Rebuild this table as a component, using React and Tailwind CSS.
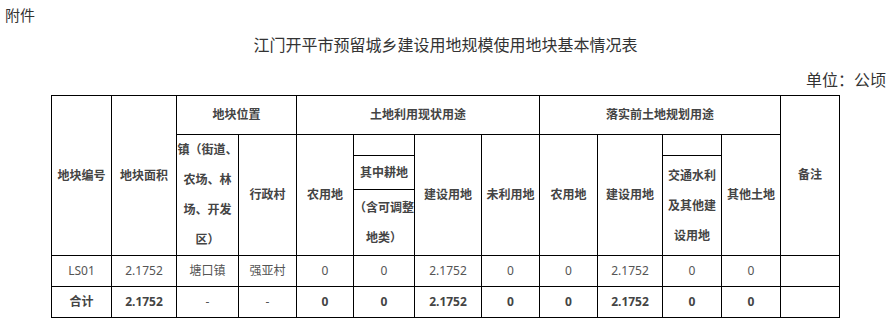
const COLS = 'grid-cols-[59px_64px_61px_57px_56px_60px_66px_57px_57px_64px_58px_58px_58px]'
const ROWS = 'grid-rows-[38px_20px_33px_65px_30px_30px]'

const dataRow = ['LS01', '2.1752', '塘口镇', '强亚村', '0', '0', '2.1752', '0', '0', '2.1752', '0', '0', '']
const totalRow = ['合计', '2.1752', '-', '-', '0', '0', '2.1752', '0', '0', '2.1752', '0', '0', '']

function Cell({ className = '', children }) {
  return (
    <div className={`bg-white flex flex-col items-center justify-center text-center whitespace-nowrap ${className}`}>
      {children}
    </div>
  )
}

function Lines({ lines }) {
  return (
    <div className="leading-[30px]">
      {lines.map((l) => (
        <div key={l}>{l}</div>
      ))}
    </div>
  )
}

export default function App() {
  return (
    <div
      className="w-[891px] h-[325px] bg-white px-[5px] text-[#333]"
      style={{ fontFamily: '"Noto Sans", "Noto Sans CJK SC", sans-serif' }}
    >
      <div className="text-[15px] leading-[30px]">附件</div>
      <div className="text-[16px] leading-[30px] text-center">江门开平市预留城乡建设用地规模使用地块基本情况表</div>
      <div className="text-[16px] leading-[30px] text-right mt-[5px]">单位：公顷</div>

      {/* table */}
      <div className="flex justify-center">
        <div className={`grid ${COLS} ${ROWS} gap-px p-px bg-black text-[12px] text-[#555]`}>
          {/* header */}
          <Cell className="row-span-4 font-bold text-[#444]">地块编号</Cell>
          <Cell className="row-span-4 font-bold text-[#444]">地块面积</Cell>
          <Cell className="col-span-2 font-bold text-[#444]">地块位置</Cell>
          <Cell className="col-span-4 font-bold text-[#444]">土地利用现状用途</Cell>
          <Cell className="col-span-4 font-bold text-[#444]">落实前土地规划用途</Cell>
          <Cell className="row-span-4 font-bold text-[#444] pb-[2px]">备注</Cell>

          <Cell className="row-span-3 font-bold text-[#444]">
            <Lines lines={['镇（街道、', '农场、林', '场、开发', '区）']} />
          </Cell>
          <Cell className="row-span-3 font-bold text-[#444]">行政村</Cell>
          <Cell className="row-span-3 font-bold text-[#444]">农用地</Cell>
          <Cell />
          <Cell className="row-span-3 font-bold text-[#444]">建设用地</Cell>
          <Cell className="row-span-3 font-bold text-[#444]">未利用地</Cell>
          <Cell className="row-span-3 font-bold text-[#444]">农用地</Cell>
          <Cell className="row-span-3 font-bold text-[#444]">建设用地</Cell>
          <Cell />
          <Cell className="row-span-3 font-bold text-[#444]">其他土地</Cell>

          <Cell className="font-bold text-[#444]">其中耕地</Cell>
          <Cell className="row-span-2 font-bold text-[#444]">
            <Lines lines={['交通水利', '及其他建', '设用地']} />
          </Cell>
          <Cell className="font-bold text-[#444]">
            <Lines lines={['（含可调整', '地类）']} />
          </Cell>

          {/* body */}
          {dataRow.map((v, i) => (
            <Cell key={'d' + i}>{v}</Cell>
          ))}
          {totalRow.map((v, i) => (
            <Cell key={'t' + i} className={v === '-' ? '' : 'font-bold text-[#444]'}>
              {v}
            </Cell>
          ))}
        </div>
      </div>
    </div>
  )
}
